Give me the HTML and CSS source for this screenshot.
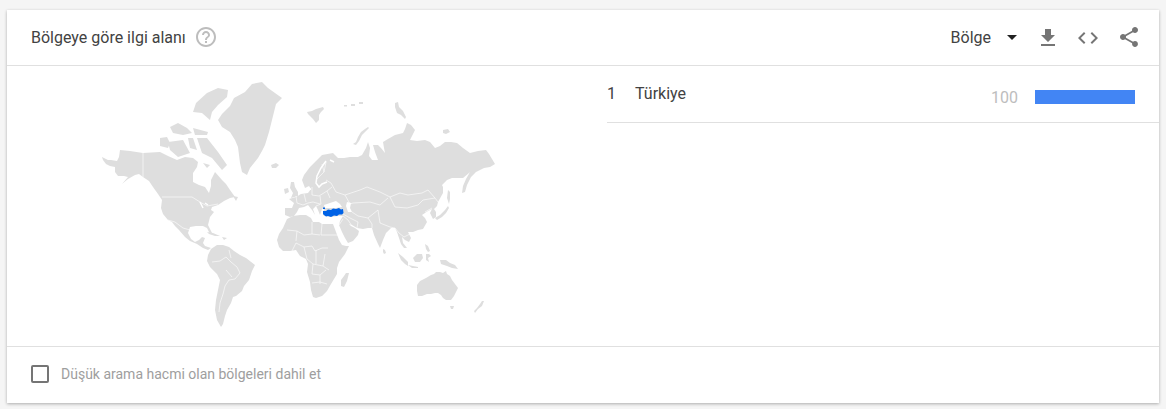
FILE: index.html
```html
<!DOCTYPE html>
<html lang="en">

<head>
  <meta charset="UTF-8">
  <title>Bölgeye göre ilgi alanı</title>
  <link rel="stylesheet" href="styles.css">
</head>

<body>

  <div class="card">

    <!-- Header -->
    <div class="card-header">
      <span class="title">Bölgeye göre ilgi alanı</span>
      <svg class="help-icon" width="24" height="24" viewBox="0 0 24 24">
        <path fill="#bdbdbd" d="M11 18h2v-2h-2v2zm1-16C6.48 2 2 6.48 2 12s4.48 10 10 10 10-4.48 10-10S17.52 2 12 2zm0 18c-4.41 0-8-3.59-8-8s3.590-8 8-8 8 3.590 8 8-3.590 8-8 8zm0-14c-2.210 0-4 1.790-4 4h2c0-1.100.9-2 2-2s2 .9 2 2c0 2-3 1.750-3 5h2c0-2.250 3-2.500 3-5 0-2.210-1.790-4-4-4z"/>
      </svg>
      <div class="actions">
        <span class="select-label">Bölge</span>
        <span class="select-arrow"></span>
        <svg class="action-icon" width="24" height="24" viewBox="0 0 24 24">
          <path fill="#757575" d="M19 9h-4V3H9v6H5l7 7 7-7zM5 18v2h14v-2H5z"/>
        </svg>
        <svg class="action-icon" width="24" height="24" viewBox="0 0 24 24">
          <path fill="#757575" d="M9.400 16.600 4.800 12l4.600-4.600L8 6l-6 6 6 6 1.400-1.400zm5.200 0 4.600-4.600-4.600-4.600L16 6l6 6-6 6-1.400-1.400z"/>
        </svg>
        <svg class="action-icon action-share" width="24" height="24" viewBox="0 0 24 24">
          <path fill="#757575" d="M18 16.080c-.76 0-1.440.3-1.960.77L8.910 12.700c.05-.23.09-.46.09-.7s-.04-.47-.09-.7l7.050-4.110c.54.5 1.250.81 2.040.81 1.660 0 3-1.340 3-3s-1.340-3-3-3-3 1.340-3 3c0 .24.04.47.09.7L8.040 9.810C7.500 9.310 6.790 9 6 9c-1.660 0-3 1.340-3 3s1.340 3 3 3c.79 0 1.500-.31 2.040-.81l7.120 4.160c-.05.21-.08.43-.08.65 0 1.610 1.310 2.920 2.920 2.920s2.920-1.310 2.920-2.920-1.310-2.920-2.920-2.920z"/>
        </svg>
      </div>
    </div>

    <!-- Map and list -->
    <div class="card-body">
      <div class="map-panel">
        <svg class="world-map" width="400" height="250" viewBox="100 80 400 250">
          <g class="land">
            <!-- North America -->
            <path d="M102 157L108 160 111 160 117 161 119 157 120 150 130 151 143 153 160 152 168 156 177 160 185 157 193 158 198 162 197 167 193 173 193 182 199 185 205 187 209 193 211 186 211 180 215 172 222 180 226 184 230 190 235 197 230 198 224 201 218 205 212 207 211 210 214 212 210 217 208 225 212 233 210 234 207 228 203 226 196 226 190 227 188 233 191 239 195 242 199 240 202 237 205 238 203 243 205 246 211 248 208 250 203 248 197 244 190 241 185 237 179 230 175 226 172 222 168 220 163 214 161 208 162 200 158 194 153 187 149 181 143 177 139 174 135 175 128 179 122 184 128 177 124 176 118 176 115 172 115 167 110 166 106 164 103 160Z"/>
            <!-- Arctic islands -->
            <path d="M196 103L207 93 218 88 228 90 227 97 218 105 212 112 210 120 202 113 193 112Z"/>
            <path d="M170 127L178 123 187 128 192 133 183 135 173 133Z"/>
            <path d="M193 128L208 132 207 135 195 135Z"/>
            <path d="M160 138L167 137 170 143 168 148 160 146Z"/>
            <path d="M168 142L183 140 190 153 178 157 170 150Z"/>
            <path d="M188 138L193 138 197 150 190 148Z"/>
            <path d="M197 138L207 138 218 152 227 165 222 170 212 158 202 153Z"/>
            <path d="M203 163L210 165 207 168Z"/>
            <path d="M233 196L238 197 236 201Z"/>
            <!-- Greenland and Iceland -->
            <path d="M218 120L222 114 230 106 234 98 245 92 252 84 262 82 268 88 282 98 276 104 274 112 272 120 269 132 265 145 262 151 258 158 250 168 247 175 242 172 240 163 239 155 238 147 235 140 230 132 222 127Z"/>
            <path d="M271 165L276 163 279 165 276 168 272 168Z"/>
            <!-- Caribbean and South America -->
            <path d="M207 232L213 233 220 236 215 236 209 234Z"/>
            <path d="M222 237L227 238 224 240Z"/>
            <path d="M211 249L217 245 223 245 229 247 234 251 240 255 246 258 255 265 252 271 249 280 244 286 242 291 236 296 233 297 231 303 227 310 225 316 223 324 221 327 217 320 215 310 216 300 218 290 220 280 217 274 210 267 207 261 208 255Z"/>
            <!-- Africa -->
            <path d="M287 219L293 216 300 215 306 215 311 218 313 222 319 222 322 224 328 224 333 224 336 232 339 240 342 245 346 246 349 246 345 254 339 262 337 268 337 274 334 279 331 284 327 291 322 296 316 298 313 297 311 290 310 282 307 272 308 264 306 259 300 256 296 250 290 251 283 251 279 247 277 240 279 234 283 228Z"/>
            <path d="M346 273L349 273 347 281 344 287 341 286 341 280 344 276Z"/>
            <!-- Eurasia -->
            <path d="M285 208L285 215 290 217 294 216 297 212 299 208 304 207 308 205 312 210 315 215 313 209 316 206 318 210 320 215 322 209 324 208 323 215 325 216 331 217 338 216 343 216 340 221 339 225 342 232 345 238 348 243 353 241 358 235 359 231 355 228 351 226 349 224 352 225 357 228 363 229 368 228 372 228 374 235 378 244 380 248 383 240 386 233 391 228 395 228 397 232 399 238 401 244 404 248 407 248 403 243 402 237 405 240 409 242 411 238 408 232 413 232 418 230 423 229 427 222 425 218 422 215 428 211 432 209 430 213 433 219 436 217 436 212 434 209 437 206 438 202 443 193 443 187 442 185 447 180 452 178 463 178 469 173 470 172 466 179 463 186 462 193 465 192 467 185 471 177 476 172 484 168 490 167 495 164 489 154 486 150 478 151 470 153 463 148 457 143 451 142 445 142 440 146 435 148 430 142 425 140 417 141 410 140 412 136 415 130 411 125 407 123 405 129 403 133 395 135 388 139 383 142 384 148 385 153 381 148 378 145 373 145 375 152 378 160 372 160 369 156 370 148 368 142 366 148 362 155 358 157 350 157 344 158 338 158 333 153 322 155 316 161 310 167 304 175 302 180 305 188 309 186 311 189 308 193 301 194 296 197 289 199 294 203 292 208Z"/>
            <!-- Islands of Europe and the Arctic -->
            <path d="M291 182L294 182 295 187 298 192 298 196 291 198 293 193 290 188Z"/>
            <path d="M284 189L288 188 289 192 285 194Z"/>
            <path d="M307 112L312 111 316 109 323 107 324 109 321 112 319 115 319 120 316 123 313 119 310 116 308 114Z"/>
            <path d="M368 127L365 129 361 132 358 137 356 142 353 144 356 145 359 141 362 135 366 131 369 128Z"/>
            <path d="M395 103L398 102 399 107 403 111 406 117 405 119 401 115 397 113 395 107Z"/>
            <path d="M443 130L448 129 450 132 446 134 443 133Z"/>
            <path d="M344 105h3v1.500h-3zM351 104h4v2h-4zM359 102h4v2h-4z"/>
            <!-- Asia islands -->
            <path d="M435 218L440 215 445 210 448 206 449 208 446 213 442 217 437 220Z"/>
            <path d="M448 190L450 192 450 199 449 204 447 198Z"/>
            <path d="M383 249L385 250 386 253 384 254 383 252Z"/>
            <path d="M398 253L403 257 408 262 408 266 405 264 401 260Z"/>
            <path d="M408 265L413 266 418 267 418 268 412 268Z"/>
            <path d="M413 258L417 254 422 254 423 258 420 262 415 262Z"/>
            <path d="M426 254L429 254 431 256 428 258 429 262 426 260Z"/>
            <path d="M425 244L428 246 430 251 428 252 426 249Z"/>
            <path d="M440 260L446 260 450 263 455 265 458 269 452 268 447 266 441 264Z"/>
            <!-- Oceania -->
            <path d="M417 285L420 281 426 278 431 275 434 274 436 272 440 272 443 273 446 271 447 274 450 276 452 280 455 284 458 288 456 292 454 296 451 300 446 300 443 298 441 295 438 293 435 293 431 294 427 294 422 296 418 296 417 291Z"/>
            <path d="M450 306L454 306 453 309 451 309Z"/>
            <path d="M484 301L482 306 478 309 475 313 474 311 477 308 480 304 482 301Z"/>
          </g>

          <!-- Inland seas -->
          <g class="water">
            <path d="M324 205L330 203 336 201 340 204 342 207 336 208 330 208 325 208Z"/>
            <path d="M347 202L351 203 350 208 352 212 348 212 346 206Z"/>
            <path class="strait" d="M326 161L321 168 317 176 316 183 319 187 322 184 327 182"/>
            <path class="strait" d="M305 190L311 189"/>
            <path class="strait" d="M330 160L334 162"/>
            <path class="strait" d="M200 202L203 208M205 203L208 205"/>
          </g>

          <!-- Country borders -->
          <g class="borders">
            <path d="M143 153V177"/>
            <path d="M162 197H192L200 202 207 206 218 204"/>
            <path d="M168 220L175 222 183 228 190 230"/>
            <path d="M212 262L220 261 226 257 231 262 237 267 240 273 235 279 229 280 225 286 223 294 220 303 219 312"/>
            <path d="M229 250L231 258M226 270L232 277"/>
            <path d="M287 230L297 231 304 235 312 234 320 235M297 231L296 241M312 234V222M322 224L321 235 327 235M327 235H339"/>
            <path d="M292 251L296 243 304 247 312 246 315 251 322 248 328 248M304 247L307 259 313 264 323 266 329 270M313 264L312 274 320 275 326 270M316 250V264M323 266L325 254"/>
            <path d="M312 283L320 282 327 284M320 275V284"/>
            <path d="M296 196L297 203 303 205 308 203 313 202 320 204M304 194L306 202M312 187V195L319 196 327 191 332 187M320 196L321 204 316 206M327 191L330 198"/>
            <path d="M316 180L324 172 326 162M324 172L322 164"/>
            <path d="M326 180L331 183 336 192 345 195 360 190 367 187 380 192 390 197 400 193 408 195 422 193 428 190 435 198 438 202"/>
            <path d="M390 197L395 207 407 208 418 205 423 200 435 198"/>
            <path d="M345 195L350 204 353 203 370 202 380 205 388 198"/>
            <path d="M343 214L350 218 358 222 357 228M352 212L358 216 368 218 372 224 372 228"/>
            <path d="M343 216L348 220 352 226M343 219L339 225"/>
            <path d="M368 218L378 210 380 223 390 227 395 228 399 233M399 233L404 237 410 234"/>
            <path d="M425 212L432 208"/>
          </g>

          <!-- Highlighted region -->
          <path class="region" d="M323 211L326 211 328 209.500 331 210 333 208.500 336 209 339 208 341 209.500 343 209 343.500 213 342 214.500 339 214.500 337 216 334 215.500 331 217 328 216 326 216.500 324 215 323 214ZM323 207.500L325 207.500 325 209 323 209Z"/>
        </svg>
      </div>

      <div class="list-panel">
        <div class="list-row">
          <span class="row-index">1</span>
          <span class="row-name">Türkiye</span>
          <span class="row-value">100</span>
          <span class="row-bar"><span class="row-bar-fill" style="width: 100%"></span></span>
        </div>
      </div>
    </div>

    <!-- Footer -->
    <div class="card-footer">
      <span class="checkbox"></span>
      <span class="checkbox-label">Düşük arama hacmi olan bölgeleri dahil et</span>
    </div>

  </div>

</body>

</html>
```

FILE: styles.css
```css
/* General Page Styles */
body {
  margin: 0;
  padding: 10px 7px 6px;
  height: 409px;
  box-sizing: border-box;
  background: #f5f5f5;
  font-family: 'Roboto', sans-serif;
  color: #424242;
  overflow: hidden;
}

/* Card */
.card {
  height: 393px;
  display: flex;
  flex-direction: column;
  background: #fff;
  box-shadow: 0 1px 3px rgba(0, 0, 0, 0.3);
}

/* Header */
.card-header {
  height: 56px;
  flex: none;
  box-sizing: border-box;
  display: flex;
  align-items: center;
  padding: 0 18px 0 24px;
  border-bottom: 1px solid #e0e0e0;
}

.title {
  font-size: 16px;
}

.help-icon {
  margin-left: 8px;
  margin-bottom: 2px;
}

.actions {
  margin-left: auto;
  display: flex;
  align-items: center;
}

.select-label {
  font-size: 16px;
}

.select-arrow {
  width: 0;
  height: 0;
  margin: 0 19px 0 16px;
  border-left: 5px solid transparent;
  border-right: 5px solid transparent;
  border-top: 5px solid #212121;
}

.action-icon {
  margin-left: 16px;
}

.select-arrow + .action-icon {
  margin-left: 0;
}

.action-share {
  margin-left: 17px;
  margin-bottom: 2px;
}

/* Map and list */
.card-body {
  flex: 1;
  display: flex;
}

.map-panel {
  width: 600px;
  flex: none;
  box-sizing: border-box;
  padding: 14px 0 0 93px;
}

.world-map {
  display: block;
}

.land {
  fill: #dedede;
}

.water {
  fill: #fff;
}

.strait {
  fill: none;
  stroke: #fff;
  stroke-width: 1.5;
}

.borders {
  fill: none;
  stroke: #fff;
  stroke-width: 0.6;
}

.region {
  fill: #0062e6;
}

.list-panel {
  flex: 1;
}

.list-row {
  height: 57px;
  box-sizing: border-box;
  display: flex;
  align-items: center;
  padding: 0 24px 2px 0;
  border-bottom: 1px solid #e0e0e0;
}

.row-index {
  width: 28px;
  font-size: 16px;
}

.row-name {
  font-size: 16px;
}

.row-value {
  margin-left: auto;
  margin-top: 8px;
  font-size: 16px;
  color: #bdbdbd;
}

.row-bar {
  width: 100px;
  height: 14px;
  margin-left: 17px;
  margin-top: 8px;
}

.row-bar-fill {
  display: block;
  height: 100%;
  background: #4285f4;
}

/* Footer */
.card-footer {
  height: 57px;
  flex: none;
  box-sizing: border-box;
  display: flex;
  align-items: center;
  padding: 0 0 2px 24px;
  border-top: 1px solid #e0e0e0;
}

.checkbox {
  width: 18px;
  height: 18px;
  box-sizing: border-box;
  border: 2px solid #757575;
  border-radius: 2px;
}

.checkbox-label {
  margin-left: 12px;
  font-size: 14px;
  color: #9e9e9e;
}
```
